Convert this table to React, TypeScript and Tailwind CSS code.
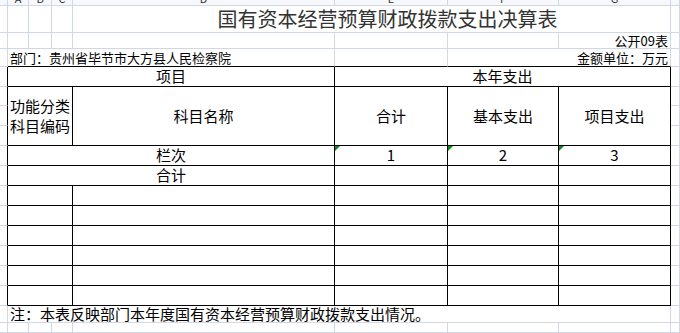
const G = "border-r border-b border-[#d0d7e5]";
const T = "border-r border-b border-black";
const L = "border-r border-b border-r-black border-b-[#d0d7e5]";
const TOP = "border-r border-b border-r-[#d0d7e5] border-b-black";
const CENTER = "flex items-center justify-center";

const LETTERS = ["A", "B", "C", "D", "E", "F", "G"];

function Tri() {
  return (
    <svg className="absolute left-0 top-0" width="5" height="5" viewBox="0 0 5 5">
      <polygon points="0,0 5,0 0,5" fill="#0a8a0a" />
    </svg>
  );
}

export default function App() {
  return (
    <div className="w-[680px] h-[333px] overflow-hidden bg-white text-black font-['Noto_Sans_CJK_SC','Noto_Sans',sans-serif]">
      <div className="grid h-full grid-cols-[8px_21px_23px_21px_262px_113px_111px_112px_1fr] grid-rows-[6px_27px_16px_18px_20px_19px_20px_20px_20px_20px_20px_20px_20px_20px_20px_20px_17px_1fr] [&>div]:min-w-0 [&>div]:overflow-hidden">
        {/* column header strip */}
        <div className={`${G} bg-[#f7f8fb]`} />
        {LETTERS.map((l) => (
          <div key={l} className={`${G} flex justify-center bg-[#f7f8fb]`}>
            <span className="-mt-[7px] text-[11px] leading-[11px] text-[#333]">{l}</span>
          </div>
        ))}
        <div className={`${G} bg-[#f7f8fb]`} />

        {/* title */}
        <div className={G} />
        <div className={G} />
        <div className={G} />
        <div className={G} />
        <div className={`${G} col-span-4 ${CENTER} pl-[32px] text-[20px] text-[#333]`}>
          国有资本经营预算财政拨款支出决算表
        </div>
        <div className={G} />

        {/* 公开09表 */}
        <div className={G} />
        <div className={G} />
        <div className={G} />
        <div className={G} />
        <div className={G} />
        <div className={G} />
        <div className={G} />
        <div className={`${G} flex items-center justify-end pr-[2px] text-[13px] whitespace-nowrap`}>
          公开09表
        </div>
        <div className={G} />

        {/* 部门 / 金额单位 */}
        <div className={G} />
        <div className={`${TOP} col-span-4 flex items-center pl-[2px] text-[13px] whitespace-nowrap`}>
          部门：贵州省毕节市大方县人民检察院
        </div>
        <div className={TOP} />
        <div className={`${TOP} col-span-2 flex items-center justify-end pr-[2px] text-[13px] whitespace-nowrap`}>
          金额单位：万元
        </div>
        <div className={G} />

        {/* table head */}
        <div className={L} />
        <div className={`${T} col-span-4 ${CENTER} text-[15px]`}>项目</div>
        <div className={`${T} col-span-3 ${CENTER} text-[15px]`}>本年支出</div>
        <div className={G} />

        <div className={L} />
        <div className={`${T} col-span-3 row-span-3 ${CENTER} text-center text-[15px] leading-[20px]`}>
          功能分类
          <br />
          科目编码
        </div>
        <div className={`${T} row-span-3 ${CENTER} text-[15px]`}>科目名称</div>
        <div className={`${T} row-span-3 ${CENTER} text-[15px]`}>合计</div>
        <div className={`${T} row-span-3 ${CENTER} text-[15px]`}>基本支出</div>
        <div className={`${T} row-span-3 ${CENTER} text-[15px]`}>项目支出</div>
        <div className={G} />
        <div className={L} />
        <div className={G} />
        <div className={L} />
        <div className={G} />

        {/* 栏次 */}
        <div className={L} />
        <div className={`${T} col-span-4 ${CENTER} text-[15px]`}>栏次</div>
        {["1", "2", "3"].map((n) => (
          <div key={n} className={`${T} relative ${CENTER} text-[15px]`}>
            <Tri />
            {n}
          </div>
        ))}
        <div className={G} />

        {/* 合计 */}
        <div className={L} />
        <div className={`${T} col-span-4 ${CENTER} text-[15px]`}>合计</div>
        <div className={T} />
        <div className={T} />
        <div className={T} />
        <div className={G} />

        {/* empty body rows */}
        {[0, 1, 2, 3, 4, 5].flatMap((r) => [
          <div key={`l${r}`} className={L} />,
          <div key={`a${r}`} className={`${T} col-span-3`} />,
          <div key={`d${r}`} className={T} />,
          <div key={`e${r}`} className={T} />,
          <div key={`f${r}`} className={T} />,
          <div key={`g${r}`} className={T} />,
          <div key={`h${r}`} className={G} />,
        ])}

        {/* note */}
        <div className={G} />
        <div className={`${G} col-span-7 flex items-center pl-[2px] text-[15px] whitespace-nowrap`}>
          注：本表反映部门本年度国有资本经营预算财政拨款支出情况。
        </div>
        <div className={G} />

        {/* trailing grid row */}
        <div className={G} />
        <div className={G} />
        <div className={G} />
        <div className={G} />
        <div className={G} />
        <div className={G} />
        <div className={G} />
        <div className={G} />
        <div className={G} />
      </div>
    </div>
  );
}
